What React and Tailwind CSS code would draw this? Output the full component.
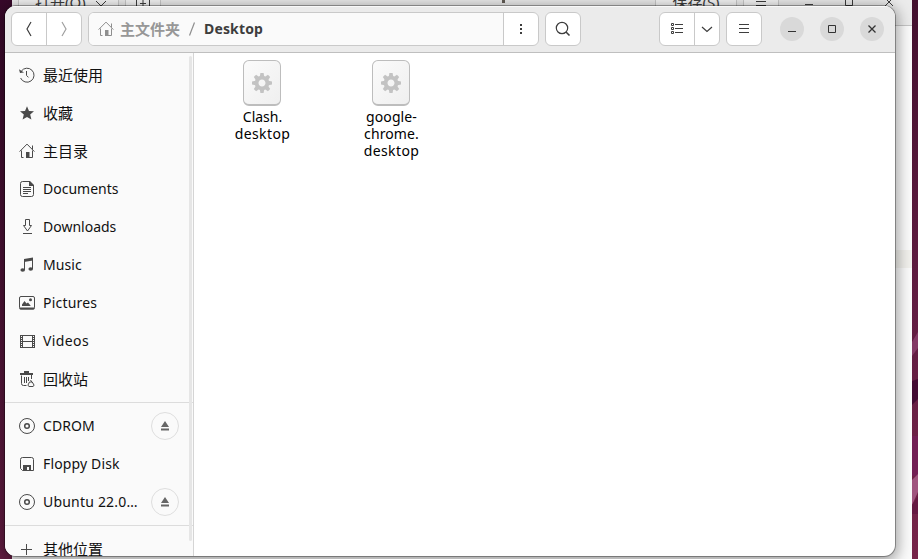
import React from "react";

const Svg = ({ w = 16, h = 16, className = "", children }) => (
  <svg width={w} height={h} viewBox={`0 0 ${w} ${h}`} fill="none" stroke="currentColor" strokeWidth="1" className={`block shrink-0 ${className}`}>
    {children}
  </svg>
);

const Home = () => (
  <Svg>
    <path d="M.6 8.600 8 1.100l7.400 7.500M13.500 6.500V2.500M2.500 7.500v7h2M13.500 7.500v7h-6" />
    <path d="M7 9h3.500v6H7z" fill="currentColor" stroke="none" />
  </Svg>
);

const Recent = () => (
  <Svg>
    <path d="M2.200 4.300A7 7 0 1 1 1.600 11M7.500 4v4.400l2 2" />
    <path d="M0 2.200 1 6l4-.6z" fill="currentColor" stroke="none" />
  </Svg>
);

const Star = () => (
  <Svg>
    <path d="m8 1.200 2 4.700 5 .4-3.800 3.300 1.200 5L8 12l-4.400 2.600 1.200-5L1 6.300l5-.4z" fill="currentColor" stroke="none" />
  </Svg>
);

const Doc = () => (
  <Svg>
    <path d="M3.500.5h7l4 4v9a2 2 0 0 1-2 2h-9a2 2 0 0 1-2-2v-11a2 2 0 0 1 2-2zM4 6.500h8M4 8.500h8M4 10.500h8M4 12.500h5" />
    <path d="M10 0h1l4 4v1h-5z" fill="currentColor" stroke="none" />
  </Svg>
);

const Download = () => (
  <Svg>
    <path d="M6.500.5h4v6h2L8.500 12 4.500 6.500h2zM4 14.500h9" />
  </Svg>
);

const Music = () => (
  <Svg>
    <path d="M5.500 13V2.500M13.500 12V1.500" />
    <path d="M5 2l9-1.500v3L5 5z" fill="currentColor" stroke="none" />
    <ellipse cx="3.700" cy="13" rx="2.300" ry="1.700" fill="currentColor" stroke="none" />
    <ellipse cx="11.700" cy="12" rx="2.300" ry="1.700" fill="currentColor" stroke="none" />
  </Svg>
);

const Picture = () => (
  <Svg>
    <rect x=".5" y="1.500" width="15" height="12.500" rx="1.500" />
    <path d="M.5 12.500h15v1a1 1 0 0 1-1 1h-13a1 1 0 0 1-1-1zM3 11V9.500L5.500 6l2 2.500L9 7.500l2.500 3v.5z" fill="currentColor" stroke="none" />
    <circle cx="11.500" cy="4.700" r="1.500" fill="currentColor" stroke="none" />
  </Svg>
);

const Video = () => (
  <Svg>
    <path d="M3.500 2v13M13.500 2v13M3 2.500h11M3 8.500h11M3 14.500h11" />
    <path d="M2.500 2v13M14.500 2v13" strokeDasharray="1 1" />
    <path d="M1.500 2v13M15.500 2v13" />
  </Svg>
);

const Trash = () => (
  <Svg>
    <path d="M5.500 2V.5h4V2M2.500 4.500v8q0 2 2 2h3M12.500 4v4M5.500 6v6M7.500 6v6M9.500 6v4" />
    <path d="M1 2h13v2H1zM5 0h5v2H5z" fill="currentColor" stroke="none" />
    <path d="m11.500 9 1.500 2.200M10.500 11l-1.500 3q0 1 1 1.500h4q1-.5 1-1.500l-1.800-3z" />
  </Svg>
);

const Disc = () => (
  <Svg>
    <circle cx="8" cy="8" r="7.500" />
    <circle cx="8" cy="8" r="2.300" strokeWidth="1.500" />
  </Svg>
);

const Floppy = () => (
  <Svg>
    <path d="M3.500 1.500h9a2 2 0 0 1 2 2v11h-11l-2-2v-9a2 2 0 0 1 2-2z" />
    <path d="M4 9h8v6h-2v-4H8v4H4z" fill="currentColor" stroke="none" />
  </Svg>
);

const Plus = () => (
  <Svg>
    <path d="M2 8.500h11M7.500 3v11" />
  </Svg>
);

const Row = ({ icon: Icon, label, cls = "", eject }) => (
  <div className="flex h-[38px] shrink-0 items-center pl-[14px] pr-[14px] text-[#4a4a4a]">
    <Icon />
    <span className={`ml-2 flex-1 whitespace-nowrap leading-5 text-[#111] ${cls}`}>{label}</span>
    {eject && (
      <span className="flex h-7 w-7 items-center justify-center rounded-full border border-[#dedede] text-[#666]">
        <Svg w={8} h={10}>
          <path d="M4 0 8 6H0zM0 7.500h8v2H0z" fill="currentColor" stroke="none" />
        </Svg>
      </span>
    )}
  </div>
);

const Sep = () => <div className="my-1 h-px shrink-0 bg-[#dcdcdc]" />;

const cjk = "text-[15px]";

const Gear = () => (
  <svg width="22" height="22" viewBox="-11 -11 22 22" className="block text-[#c3c3c3]">
    <circle r="5.400" fill="none" stroke="currentColor" strokeWidth="3.800" />
    {[0, 45, 90, 135, 180, 225, 270, 315].map((a) => (
      <path key={a} d="M-2.200-6.500-1.600-10h3.200l.6 3.500z" fill="currentColor" transform={`rotate(${a})`} />
    ))}
  </svg>
);

const File = ({ lines }) => (
  <div className="flex w-[129px] flex-col items-center">
    <div className="flex h-[46px] w-[38px] items-center justify-center rounded-[6px] border border-b-2 border-[#bdbdbd] bg-gradient-to-br from-[#fbfbfb] to-[#efefef]">
      <Gear />
    </div>
    <div className="mt-[2px] pl-[2px] text-center text-[14px] leading-[17px] text-black">
      {lines.map(([t, c]) => (
        <div key={t} className={c}>{t}</div>
      ))}
    </div>
  </div>
);

const group = "flex h-[34px] shrink-0 overflow-hidden rounded-[6px] border border-[#c9c9c9] bg-white text-[#3d3d3d]";
const cell = "flex items-center justify-center";

const WinButton = ({ children }) => (
  <div className="flex h-6 w-6 items-center justify-center rounded-full bg-[#d9d9d9] text-[#333]">{children}</div>
);

function BackWindow() {
  return (
    <div className="absolute left-[12px] top-0 h-[559px] w-[900px] overflow-hidden bg-[#fafafa]">
      <div className="flex h-[26px] border-b border-[#c4c4c4] bg-[#ebebeb] text-[#3d3d3d]">
        <div className="-mt-[7px] ml-[6px] flex h-[18px] w-[101px] items-center border-x border-[#c9c9c9] bg-[#f4f4f4] pl-[16px] text-[15px]">
          <span className="whitespace-nowrap">打开(O)</span>
          <Svg w={12} h={8} className="ml-[9px] mt-[3px]"><path d="m1 1 5 5 5-5" /></Svg>
        </div>
        <div className="-mt-[7px] ml-[6px] flex h-[18px] w-[36px] items-center justify-center border-x border-[#c9c9c9] bg-[#f4f4f4]">
          <Svg w={14} h={14}><path d="M.5 0v12.500h13V0M4 8.500h6M7 5v6" /></Svg>
        </div>
        <div className="ml-[341px] h-[3px] w-[3px] bg-[#625c55]" />
        <div className="-mt-[7px] ml-[150px] flex h-[18px] w-[82px] items-center justify-center border-x border-[#c9c9c9] bg-[#f4f4f4] text-[15px]">保存(S)</div>
        <div className="-mt-[7px] ml-[6px] flex h-[18px] w-[36px] justify-center border-x border-[#c9c9c9] bg-[#f4f4f4]">
          <Svg w={10} h={16}><path d="M0 8.500h10M0 12.500h10" /></Svg>
        </div>
        <Svg w={90} h={10} className="ml-[26px]">
          <path d="M0 4.500h8M40.500 0v5.500h7V0M80-2l8 8M88-2l-8 8" />
        </Svg>
      </div>
      <div className="mt-[224px] h-[18px] bg-[#f1f0ec]" />
    </div>
  );
}

export default function App() {
  return (
    <div className="relative h-[559px] w-[918px] overflow-hidden bg-gradient-to-b from-[#37092a] to-[#651d43] font-['Noto_Sans','Noto_Sans_CJK_SC',sans-serif]">
      <svg className="absolute right-0 top-0" width="6" height="559" viewBox="0 0 6 559">
        <defs>
          <linearGradient id="wall" x1="0" y1="0" x2="0" y2="1">
            <stop offset="0" stopColor="#43102e" />
            <stop offset=".55" stopColor="#611d42" />
            <stop offset="1" stopColor="#762449" />
          </linearGradient>
        </defs>
        <path d="M0 0h6v559H0z" fill="url(#wall)" />
        <path d="M0 342 6 332v16l-6 8z" fill="#843a66" />
        <path d="M0 381l6-2v20l-6 6z" fill="#430b33" />
        <path d="M0 436h6v40H0z" fill="#721f54" />
        <path d="M0 480l6-6v18L0 505z" fill="#a0557f" />
        <path d="M0 505l6-9v18H0z" fill="#651942" />
      </svg>
      <BackWindow />
      <div className="absolute left-[5px] top-[6px] flex h-[550px] w-[890px] flex-col overflow-hidden rounded-[11px] bg-white shadow-[0_0_0_1px_rgba(0,0,0,0.32),0_3px_14px_3px_rgba(0,0,0,0.36)]">
        <header className="flex h-[47px] shrink-0 items-center border-b border-[#bfbfbf] bg-[#ebebeb] pl-[6px] pr-[11px] shadow-[inset_0_1px_0_#f9f9f9]">
          <div className={`${group} w-[71px]`}>
            <div className={`${cell} w-[35px] border-r border-[#c9c9c9]`}>
              <Svg w={8} h={16}><path d="M6 1 2 8l4 7" strokeWidth="1.200" /></Svg>
            </div>
            <div className={`${cell} flex-1 text-[#a0a0a0]`}>
              <Svg w={8} h={16}><path d="m2 1 4 7-4 7" strokeWidth="1.200" /></Svg>
            </div>
          </div>
          <div className={`${group} ml-[6px] w-[451px]`}>
            <div className="flex flex-1 items-center border-r border-[#c9c9c9] bg-[#fafafa] pl-[9px] text-[#8e8e8e]">
              <Home />
              <span className="ml-[6px] text-[15px] font-bold text-[#979797]">主文件夹</span>
              <Svg w={8} h={16} className="ml-[8px]"><path d="M6.500 1.500 1.500 14.500" strokeWidth="1.200" /></Svg>
              <span className="ml-[8px] pb-[2px] text-[14px] font-bold tracking-[0.15px] text-[#3d3d3d]">Desktop</span>
            </div>
            <div className={`${cell} w-[34px]`}>
              <Svg w={2} h={10}><path d="M0 0h2v2H0zM0 4h2v2H0zM0 8h2v2H0z" fill="currentColor" stroke="none" /></Svg>
            </div>
          </div>
          <div className={`${group} ${cell} ml-[6px] w-[36px]`}>
            <Svg><circle cx="7" cy="7" r="5.700" strokeWidth="1.200" /><path d="m11 11 3.500 3.500" strokeWidth="1.600" /></Svg>
          </div>
          <div className="flex-1" />
          <div className={`${group} w-[61px]`}>
            <div className={`${cell} w-[35px] border-r border-[#c9c9c9]`}>
              <Svg w={12} h={12}>
                <path d="M.5.5h2v2h-2zM.5 4.500h2v2h-2zM.5 8.500h2v2h-2zM4 1.500h8M4 5.500h8M4 9.500h8" />
              </Svg>
            </div>
            <div className={`${cell} flex-1`}>
              <Svg w={12} h={8}><path d="m1 2 5 4.500L11 2" strokeWidth="1.200" /></Svg>
            </div>
          </div>
          <div className={`${group} ${cell} ml-[6px] w-[36px]`}>
            <Svg w={10} h={10}><path d="M0 .5h10M0 4.500h10M0 8.500h10" /></Svg>
          </div>
          <div className="ml-[18px] flex gap-4">
            <WinButton><Svg w={8} h={8}><path d="M0 6.500h8" /></Svg></WinButton>
            <WinButton><Svg w={8} h={8}><path d="M.5.5h7v7h-7z" /></Svg></WinButton>
            <WinButton><Svg w={8} h={8}><path d="m.5.500 7 7M7.500.5l-7 7" strokeWidth="1.300" /></Svg></WinButton>
          </div>
        </header>
        <div className="flex min-h-0 flex-1">
          <aside className="flex w-[189px] shrink-0 border-r border-[#d5d5d5] bg-[#fafafa]">
            <nav className="-mr-[4px] flex w-[188px] flex-col pt-[3px]">
              <Row icon={Recent} label="最近使用" cls={cjk} />
              <Row icon={Star} label="收藏" cls={cjk} />
              <Row icon={Home} label="主目录" cls={cjk} />
              <Row icon={Doc} label="Documents" cls="text-[14px]" />
              <Row icon={Download} label="Downloads" cls="text-[14px]" />
              <Row icon={Music} label="Music" cls="text-[14px] tracking-[0.1px]" />
              <Row icon={Picture} label="Pictures" cls="text-[14px] tracking-[0.2px]" />
              <Row icon={Video} label="Videos" cls="text-[14px] tracking-[0.4px]" />
              <Row icon={Trash} label="回收站" cls={cjk} />
              <Sep />
              <Row icon={Disc} label="CDROM" cls="text-[14px] tracking-[0.1px]" eject />
              <Row icon={Floppy} label="Floppy Disk" cls="text-[14px] tracking-[0.15px]" />
              <Row icon={Disc} label="Ubuntu 22.0…" cls="text-[14px] tracking-[0.2px]" eject />
              <Sep />
              <Row icon={Plus} label="其他位置" cls={cjk} />
            </nav>
            <div className="mt-[3px] h-[485px] w-[3px] rounded-full bg-[#e6e6e6]" />
          </aside>
          <main className="flex flex-1 pl-[3px] pt-[7px]">
            <File lines={[["Clash.", ""], ["desktop", "tracking-[0.4px]"]]} />
            <File lines={[["google-", "tracking-[0.1px]"], ["chrome.", "tracking-[0.1px]"], ["desktop", "tracking-[0.4px]"]]} />
          </main>
        </div>
      </div>
    </div>
  );
}
